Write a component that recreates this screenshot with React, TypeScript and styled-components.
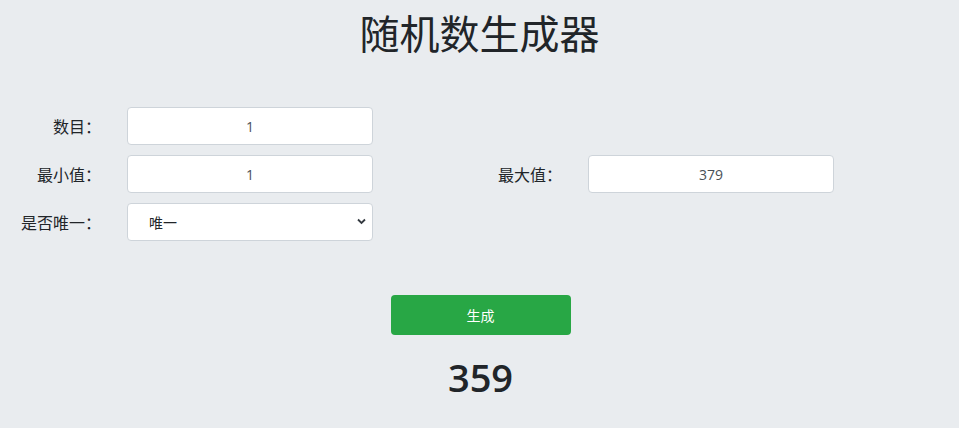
import React, { useState } from "react";
import styled, { createGlobalStyle } from "styled-components";

const Global = createGlobalStyle`
  html, body { margin: 0; padding: 0; background: #e9ecef; }
  body {
    font-family: "Open Sans", "Noto Sans CJK SC", sans-serif;
    color: #212529;
  }
  * { box-sizing: border-box; }
`;

const Page = styled.div`
  width: 959px;
  min-height: 428px;
  background: #e9ecef;
  display: flex;
  flex-direction: column;
`;

const Title = styled.h1`
  margin: 0;
  padding-top: 8px;
  height: 107px;
  text-align: center;
  font-family: "Noto Sans CJK SC", sans-serif;
  font-weight: 400;
  font-size: 40px;
  line-height: 48px;
  color: #212529;
`;

const Form = styled.div`
  display: grid;
  grid-template-columns: 461px 461px;
  row-gap: 10px;
`;

const Field = styled.div<{ $col?: number }>`
  display: flex;
  align-items: center;
  gap: 26px;
  grid-column: ${(p) => p.$col ?? 1};
`;

const Label = styled.label`
  width: 101px;
  text-align: right;
  font-family: "Noto Sans CJK SC", sans-serif;
  font-size: 16px;
  color: #212529;
`;

const Input = styled.input`
  width: 246px;
  height: 38px;
  border: 1px solid #ced4da;
  border-radius: 4px;
  background: #fff;
  text-align: center;
  font-family: "Open Sans", "Noto Sans CJK SC", sans-serif;
  font-size: 14px;
  color: #495057;
  outline: none;
`;

const SelectWrap = styled.div`
  position: relative;
  width: 246px;
  height: 38px;
`;

const Select = styled.select`
  width: 100%;
  height: 100%;
  appearance: none;
  border: 1px solid #ced4da;
  border-radius: 4px;
  background: #fff;
  padding-left: 21px;
  font-family: "Noto Sans CJK SC", sans-serif;
  font-size: 14px;
  color: #212529;
  outline: none;
`;

const Chevron = styled.svg`
  position: absolute;
  right: 7px;
  top: 15px;
  pointer-events: none;
`;

const Actions = styled.div`
  display: flex;
  flex-direction: column;
  align-items: center;
  padding-top: 54px;
`;

const Button = styled.button`
  width: 180px;
  height: 40px;
  border: none;
  border-radius: 4px;
  background: #28a745;
  color: #fff;
  font-family: "Noto Sans CJK SC", sans-serif;
  font-size: 14px;
  cursor: pointer;
  margin-left: 2px;
`;

const Result = styled.div`
  margin-top: 16px;
  margin-left: 2px;
  font-family: "Open Sans", sans-serif;
  font-weight: 600;
  font-size: 38px;
  line-height: 52px;
  color: #212529;
`;

export default function App() {
  const [count, setCount] = useState("1");
  const [min, setMin] = useState("1");
  const [max, setMax] = useState("379");
  const [unique, setUnique] = useState("1");
  const [result, setResult] = useState("359");

  const generate = () => {
    const lo = parseInt(min, 10) || 0;
    const hi = parseInt(max, 10) || 0;
    const n = Math.max(1, parseInt(count, 10) || 1);
    const out: number[] = [];
    while (out.length < n) {
      const v = lo + Math.floor(Math.random() * (hi - lo + 1));
      if (unique === "1" && out.includes(v) && hi - lo + 1 > out.length) continue;
      out.push(v);
    }
    setResult(out.join(", "));
  };

  return (
    <Page>
      <Global />
      <Title>随机数生成器</Title>
      <Form>
        <Field>
          <Label>数目：</Label>
          <Input value={count} onChange={(e) => setCount(e.target.value)} />
        </Field>
        <Field $col={1}>
          <Label>最小值：</Label>
          <Input value={min} onChange={(e) => setMin(e.target.value)} />
        </Field>
        <Field $col={2}>
          <Label>最大值：</Label>
          <Input value={max} onChange={(e) => setMax(e.target.value)} />
        </Field>
        <Field $col={1}>
          <Label>是否唯一：</Label>
          <SelectWrap>
            <Select value={unique} onChange={(e) => setUnique(e.target.value)}>
              <option value="1">唯一</option>
              <option value="0">不唯一</option>
            </Select>
            <Chevron width="9" height="7" viewBox="0 0 9 7">
              <path d="M1 1.5 L4.5 5 L8 1.5" fill="none" stroke="#343a40" strokeWidth="1.8" />
            </Chevron>
          </SelectWrap>
        </Field>
      </Form>
      <Actions>
        <Button onClick={generate}>生成</Button>
        <Result>{result}</Result>
      </Actions>
    </Page>
  );
}
